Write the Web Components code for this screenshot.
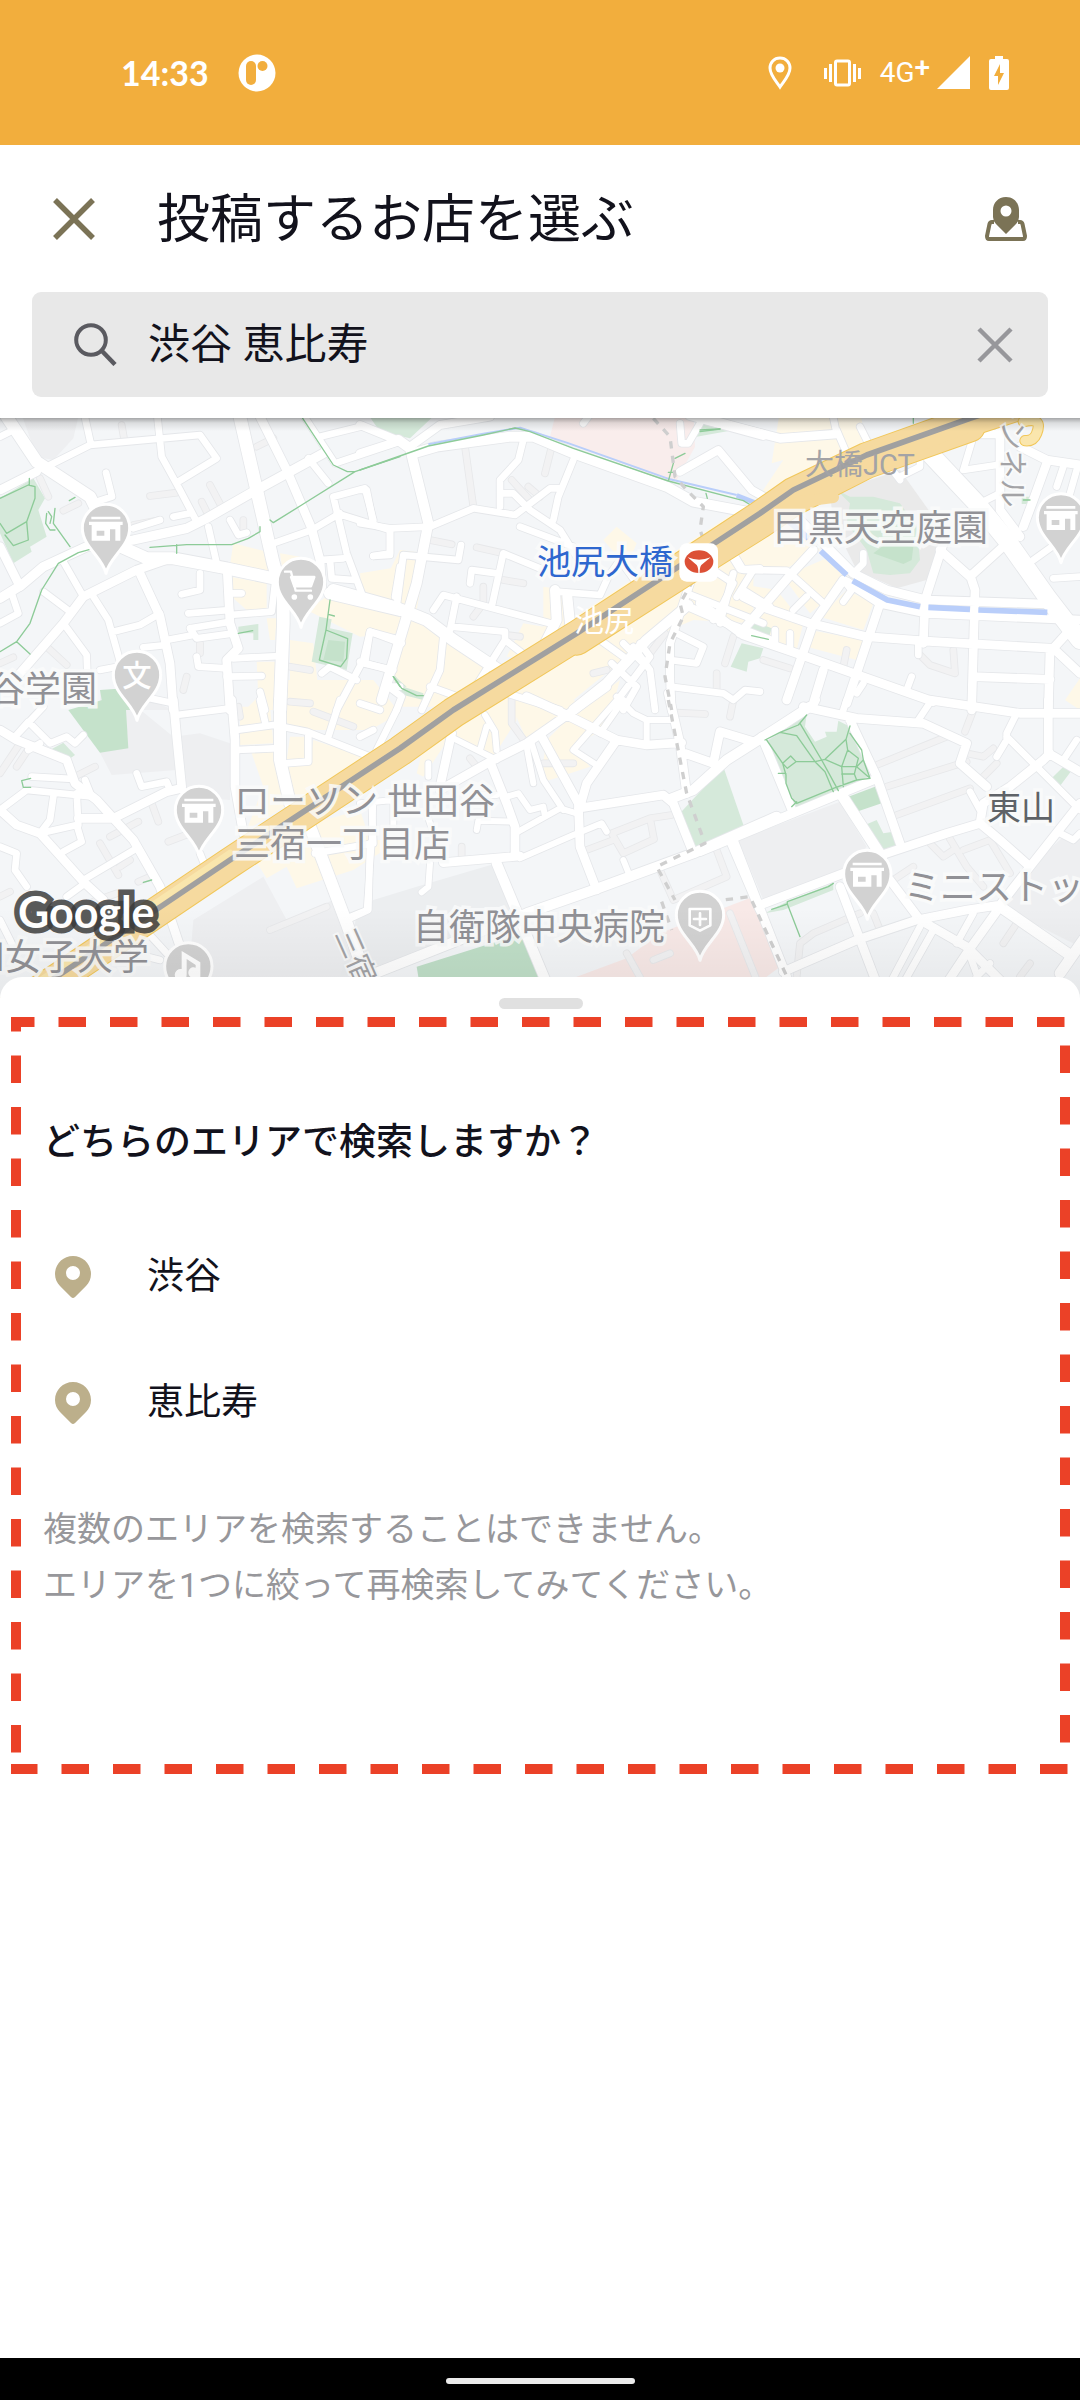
<!DOCTYPE html>
<html lang="ja">
<head>
<meta charset="utf-8">
<meta name="viewport" content="width=device-width, initial-scale=1">
<title>投稿するお店を選ぶ</title>
<style>
    body {
        margin: 0;
        background: #fff;
        color: #12121c;
        font-family: Roboto, "Noto Sans CJK JP", sans-serif;
    }
</style>
</head>
<body>
<place-picker></place-picker>

<script>
function define(name, html) {
    const template = document.createElement('template');
    template.innerHTML = html;
    customElements.define(name, class extends HTMLElement {
        constructor() {
            super();
            this.attachShadow({ mode: 'open' });
            this.shadowRoot.appendChild(template.content.cloneNode(true));
        }
    });
}

define('status-bar', `
    <style>
        :host {
            display: flex;
            align-items: center;
            justify-content: space-between;
            height: 145px;
            padding: 0 71px 0 121px;
            box-sizing: border-box;
            background: #f2ae3d;
            color: #fff;
        }
        div { display: flex; align-items: center; }
        .left { gap: 29px; }
        .time { font: 700 34px/40px Lato, sans-serif; }
        .network { font-size: 28px; line-height: 40px; margin: 0 7px 0 19px; }
        sup { font-size: 28px; line-height: 0; vertical-align: 5px; font-weight: 500; }
        svg { display: block; }
        .vibrate { margin-left: 32px; }
        .battery { margin-left: 19px; }
    </style>
    <div class="left">
        <span class="time">14:33</span>
        <svg width="38" height="38" viewBox="0 0 38 38">
            <circle cx="19" cy="19" r="18.500" fill="#fff"/>
            <rect x="8" y="7" width="10" height="24" rx="5" fill="#f2ae3d"/>
            <circle cx="24.500" cy="12" r="5" fill="#f2ae3d"/>
        </svg>
    </div>
    <div>
        <svg width="24" height="34" viewBox="0 0 24 34">
            <path d="M12 2C6 2 2 6.500 2 12C2 19 8 25 12 31C16 25 22 19 22 12C22 6.500 18 2 12 2Z" fill="none" stroke="#fff" stroke-width="3"/>
            <circle cx="12" cy="12" r="4.500" fill="#fff"/>
        </svg>
        <svg class="vibrate" width="37" height="28" viewBox="0 0 37 28" fill="#fff">
            <rect x="11.500" y="2" width="14" height="24" rx="1.500" fill="none" stroke="#fff" stroke-width="3"/>
            <path d="M0 9h3v11H0zM5 5h3v18H5zM29 5h3v18h-3zM34 9h3v11h-3z"/>
        </svg>
        <span class="network">4G<sup>+</sup></span>
        <svg width="33" height="33" viewBox="0 0 33 33"><path d="M33 0V33H0Z" fill="#fff"/></svg>
        <svg class="battery" width="20" height="34" viewBox="0 0 20 34">
            <path d="M6 0h8v3h4q2 0 2 2v27q0 2-2 2H2q-2 0-2-2V5q0-2 2-2h4z" fill="#fff"/>
            <path d="M11 8L5 20h4v9l6-12h-4z" fill="#f2ae3d"/>
        </svg>
    </div>
`);

define('icon-button', `
    <style>
        :host { display: block; }
        button {
            display: flex;
            align-items: center;
            justify-content: center;
            width: 64px;
            height: 64px;
            padding: 0;
            border: 0;
            background: none;
            color: inherit;
            cursor: pointer;
        }
    </style>
    <button type="button"><slot></slot></button>
`);

define('top-bar', `
    <style>
        :host { display: flex; align-items: center; height: 147px; padding: 0 42px; }
        icon-button { color: #7b7356; }
        h1 { flex: 1; margin: 0 0 0 51px; padding-top: 3px; font-size: 53px; font-weight: 400; line-height: 72px; }
    </style>
    <icon-button>
        <svg width="42" height="42" viewBox="0 0 42 42" role="img" aria-label="閉じる">
            <path d="M2 2L40 40M40 2L2 40" stroke="currentColor" stroke-width="5.500"/>
        </svg>
    </icon-button>
    <h1><slot></slot></h1>
    <icon-button>
        <svg width="42" height="44" viewBox="0 0 42 44" role="img" aria-label="地図">
            <path d="M9 25H7Q5 25 4.500 27L2 39Q2 42 4 42H38Q40 42 40 39L37.500 27Q37 25 35 25H33" fill="none" stroke="currentColor" stroke-width="4"/>
            <path fill-rule="evenodd" fill="currentColor" d="M21 0C13 0 8 6 8 13V20Q8 24 11 27L21 37L31 27Q34 24 34 20V13C34 6 29 0 21 0ZM21 8.500A5.500 5.500 0 1 1 21 19.500A5.500 5.500 0 1 1 21 8.500Z"/>
        </svg>
    </icon-button>
`);

define('search-field', `
    <style>
        :host {
            display: flex;
            align-items: center;
            height: 105px;
            margin: 0 32px 21px;
            padding: 0 21px 0 42px;
            border-radius: 9px;
            background: #e8e8e8;
        }
        label { display: flex; flex: 1; align-items: center; gap: 31px; color: #5a5a60; }
        input {
            flex: 1;
            min-width: 0;
            padding: 0;
            border: 0;
            outline: 0;
            background: none;
            color: #12121c;
            font: inherit;
            font-size: 42px;
            line-height: 60px;
        }
        icon-button { color: #97979b; }
    </style>
    <label>
        <svg width="43" height="43" viewBox="0 0 43 43" role="img" aria-label="検索">
            <circle cx="17" cy="17" r="14.800" fill="none" stroke="currentColor" stroke-width="4"/>
            <path d="M27.500 27.500L41 41.500" stroke="currentColor" stroke-width="4.500"/>
        </svg>
        <input type="text" value="渋谷 恵比寿">
    </label>
    <icon-button>
        <svg width="36" height="36" viewBox="0 0 36 36" role="img" aria-label="クリア">
            <path d="M2 2L34 34M34 2L2 34" stroke="currentColor" stroke-width="4.500"/>
        </svg>
    </icon-button>
`);

define('map-label', `
    <style>
        :host {
            position: absolute;
            color: #919196;
            font-size: 36px;
            line-height: 43px;
            white-space: nowrap;
            paint-order: stroke fill;
            -webkit-text-stroke: 7px rgba(250, 251, 251, .85);
        }
        :host([small]) { font-size: 29px; color: #a3a3a6; -webkit-text-stroke-width: 4px; }
        :host([plain]) { -webkit-text-stroke-width: 0; }
        :host([area]) { color: #5f6368; font-size: 34px; }
        :host([station]) { color: #2e67cf; font-size: 34px; }
        :host([road]) { color: #fff; font-size: 30px; -webkit-text-stroke-width: 0; }
        :host([sideways]) { writing-mode: vertical-rl; text-orientation: sideways; }
    </style>
    <slot></slot>
`);

// Map geometry is drawn at three units to the pixel, in six tiles.
const tiles = { a: [0, 0], b: [1080, 0], c: [2100, 0], d: [0, 870], e: [1080, 870], f: [2100, 870] };

const areas = [
    // blocks
    ['a', '#eeeff1', 'M60 0H240L220 85L160 150L110 140ZM300 840H380L520 900H300Z'],
    ['d', '#eeeff1', 'M300 158L385 0L520 110L600 100L690 130V300L550 290L530 210L335 225ZM580 660L790 530L860 660L1000 600L1090 900H560Z'],
    ['e', '#eceef0', 'M40 600L170 560L410 490L480 640L30 830H-60L-10 650Z'],
    ['f', '#eeeff1', 'M115 420L420 305L500 440L420 520L190 600ZM980 510L1090 410H1140V740L900 620Z'],
    ['c', '#eaeaea', 'M390 250L600 180L700 320L730 400L680 510L590 535L470 480L400 340Z'],
    // shopping streets
    ['a', '#fef8e8', 'M700 400L820 430L815 495L690 465ZM690 500L800 520V600H740L695 560ZM800 625H830L825 690H810ZM870 690L940 700L955 840L930 880H870ZM770 755H825L820 900H735L775 860ZM920 600L980 560L1200 620V670L1080 680L1000 640ZM1080 490L1200 470V590L1090 570ZM840 430L900 440L850 500Z'],
    ['b', '#fef8e8', 'M0 500L90 480L120 420L200 430L170 600L0 570ZM0 600L180 620L420 780L240 890H120L100 800L140 640L70 670H0ZM550 530L620 540V660L480 740L440 740L490 640L550 650ZM730 390L770 350L830 400L800 470ZM600 650L1120 310L1180 290V400L560 760ZM240 900L640 700L990 500L1180 400V640L1000 630L860 690L640 870L560 910ZM640 870L700 900H560Z'],
    ['c', '#fef8e8', 'M240 0H480L500 120L300 220L150 300L250 150L215 160ZM30 420L260 300L360 420L250 480H130ZM250 500L390 440L440 520L330 610ZM0 470L80 480L60 600L0 560ZM110 520L230 540L310 640L190 590ZM440 540L520 580L490 660L360 620ZM330 660L490 690L470 750L320 710ZM160 600L310 640L290 720L170 690ZM1095 870L1140 805V900Z'],
    ['d', '#fef8e8', 'M720 20H810L820 130L720 135ZM755 160L820 150L870 310L740 390L790 260ZM850 -60H1120L1200 40L1110 90L920 90L860 70ZM870 110L915 110V180H860ZM940 120L1120 180L880 310L860 200L930 190ZM800 535L740 440L900 380L1080 330L1110 420L1200 420L1060 510L890 565L860 500Z'],
    ['e', '#fef8e8', 'M170 220L200 100L460 -60L470 60L400 170L270 110L190 230ZM460 30L620 40L500 120ZM620 60L780 -60L740 80L640 140L690 200L540 250L560 120Z'],
    // hospitals
    ['b', '#f9edec', 'M590 0H1000L1005 110L950 210L920 210L570 80Z'],
    ['e', '#f8e9e7', 'M650 830L800 775L900 700L1050 640L1180 590L1260 800L1180 860H650Z'],
    // parks
    ['a', '#d5e9da', 'M0 265L100 205L135 265L115 300L140 380L90 410L95 425L40 460L0 370ZM715 650L775 642V690H760V670H715ZM958 620L995 628L990 655L1058 670L1040 780L935 755ZM1180 795L1220 830L1190 830Z'],
    ['a', '#c5e2cb', 'M985 690L1035 695L1030 755L970 750ZM300 840L375 835L390 900L310 900Z'],
    ['b', '#d5e9da', 'M15 0H240L150 85L60 65ZM1020 40L1110 62L1010 80ZM100 790L130 830L190 850V870L110 850ZM1165 670L1185 635L1235 655L1225 690ZM1145 700L1210 715L1200 745L1165 755L1160 785L1112 770Z'],
    ['c', '#d5e9da', 'M410 240L450 260L520 260L600 280L650 350L660 450L630 490L570 495L520 490L500 420L440 340L450 280ZM965 260H990V282H965Z'],
    ['c', '#c5e2cb', 'M520 430L560 400L600 405L640 410L635 450L610 462Z'],
    ['d', '#c5e2cb', 'M205 30L375 -20L385 145L300 158Z'],
    ['d', '#d5e9da', 'M150 150L190 128L225 165L200 182Z'],
    ['e', '#d5e9da', 'M960 340L1090 200L1152 380L1010 445Z'],
    ['e', '#c0dfc8', 'M170 800L490 700L545 860H180Z'],
    ['f', '#d5e9da', 'M195 115L320 42L315 80L345 125L380 110L375 95L410 95L415 62L450 80L512 235L280 325ZM495 375L530 360L550 400L580 395L595 435L545 455ZM195 640L260 605L400 550V570L250 630ZM1055 235L1090 200L1112 215L1080 258Z'],
    ['f', '#c5e2cb', 'M445 290L525 260L545 310L470 335Z']
];

// Service lanes, grey
const lanes = [
    ['a', 'M365 45L372 85M120 205L145 260M190 302L235 280M450 258L530 248M630 225L670 300M605 275L620 305M400 345L480 330M730 330V365M140 710L200 765M0 760L40 742M600 700V730M560 800L550 840M770 110L820 85M870 770L930 780M870 875L930 880'],
    ['b', 'M315 110L340 290M575 110L555 190M455 210L510 270M505 230L540 260M210 390L275 403M350 412L430 430M430 510L490 520M370 530L370 580L340 620M440 675L480 680M915 670L870 730M700 790L740 780M1120 680L1095 760M1070 790V840'],
    ['c', 'M190 750L270 775M440 720L430 770M760 720L765 790L690 765L660 735'],
    ['d', 'M60 130L0 220M50 200L90 140M225 230L285 200M455 310L475 365M505 425L570 400M330 410L415 365M300 430L355 525M360 500L390 480M415 545L450 530M280 605L350 580M0 590L30 575M810 690L980 620M715 20L720 50M940 35L1060 80'],
    ['e', 'M455 -30L455 70L495 125M330 175L350 200M550 190L640 190M305 440V470M680 450L760 420M755 400L870 355L935 345M870 355L882 418L790 460L755 400M950 38L1035 42M1120 0L1110 50M900 510L940 600L1100 530L1070 450M1110 640L1190 840M800 760L850 850M880 780L930 760'],
    ['f', 'M820 30L795 95M530 195L740 110M560 260L800 185M590 345L810 265M800 160L850 170L880 145M850 230L890 190M690 430L730 470L760 450M740 400L800 500L850 560M790 450L870 420L930 520M290 830L300 730L340 700L480 640M520 640L540 690M950 670L910 730M990 790L960 830M580 540L640 500']
];

// [tile, width, path]
const roads = [
    ['a', 20, 'M0 80L30 65M150 165L270 105L600 75L650 145L535 215M250 0L272 100M470 0L485 140L540 240L590 335M625 350L650 460M318 188L336 260L290 275M0 640L55 610L35 550M190 455L250 560M280 560L325 630L370 790M340 665L420 645L480 610M130 545L210 605M190 640L260 735L262 790L190 795M500 690L580 675M430 712L500 705M600 490V540L545 553M565 610L690 600M570 655L690 635M570 655L590 685L700 670M690 550H725M690 615L815 605L825 520M590 740L595 770L680 775M680 800L785 798M700 745L840 738M780 845L795 900M925 145L985 220M900 0L1005 160L1200 95M960 80L1090 48M820 400L935 360L1020 310M1120 330L1095 235L1000 260L1040 430L1085 550M1010 310L1170 360V435L1120 438M960 450L1030 445M990 450L995 505L1060 510M1200 690L1110 665L1090 750L1010 900M1090 760L1180 780M965 790L990 770L1070 810M1200 470L1185 560M1200 830L1155 830L1180 750M690 330L715 375L740 368M520 320L570 310M400 355L480 330M300 780L380 765M450 865L520 880'],
    ['a', 26, 'M0 240L110 185M60 790L190 640L250 560L410 480L510 445M0 410L60 530M420 490L480 620L510 760L520 900M682 490L690 640L715 715L680 750L690 900M770 0L860 180L935 355L960 450L965 530'],
    ['a', 28, 'M0 565L65 525L130 470L260 410L400 390L560 355L620 325L760 245L970 130'],
    ['a', 36, 'M20 20L110 155L270 260L340 400L440 445L520 445L680 475L820 505M990 550L1200 600'],
    ['a', 38, 'M715 0L770 240L820 460L850 560V640L840 900'],
    ['b', 20, 'M490 90L475 150L420 210V290M420 250H460L510 300L600 360L650 440M640 150L595 260L580 330M0 340L90 355L210 350L340 295L465 315L570 235H600M90 360V430L40 438M0 240H20L40 340M480 350L640 410M110 590L130 435L295 450L303 405M220 600L250 555L570 640M395 590L430 430L540 475M330 520L335 480L410 490M290 560L270 660M275 650L435 665V690L350 825M435 690L500 740M250 680L240 780L185 900M210 830L320 870M0 755L90 780M15 760L30 665L125 700M0 880L60 900M85 830L125 860L110 900M590 545L720 555L745 500L780 450L830 520M1110 430L1140 478L1200 475M1060 480L1120 520L1090 580L1060 630M980 550L1210 640M1180 480L1130 560M950 670L1030 710L1010 760L930 750M820 710L870 780L885 900M720 690L790 740M790 700L850 760M755 760L830 830L790 900M840 700L870 740L780 860M930 830L1090 850L1120 870L1155 840L1200 845M960 40L965 100H985L1020 40M670 40L700 0M440 850L600 900'],
    ['b', 24, 'M0 130L110 95M110 90L0 45M150 110L240 45L390 20M960 185L1075 120L1175 240L1220 265M985 590L1100 640L1230 690M990 520L930 700V800L935 900'],
    ['b', 30, 'M160 130L230 110L450 80H520L640 130L920 230L1000 275L1160 305M115 90L150 115L205 340L170 520L65 870M985 585L860 690L740 820L640 900M585 540L590 630L555 700M622 560L630 640M990 15L1210 75'],
    ['b', 36, 'M-80 540L100 590L200 630L280 690L430 790'],
    ['c', 20, 'M410 60L440 130M395 0L410 70M480 50L510 110M820 80L790 180L890 165M1090 170L1070 230M1130 180L1110 250M1000 450L1140 350M1060 505L1140 500M840 280L900 250M100 430L130 480L260 482M100 490L60 640M270 490L370 580M320 560L280 600M430 575L455 540L430 510M655 700V735M620 840L635 800M490 430V460L460 490M570 170L600 210M660 130V170L600 200M470 850L490 820M225 660V700M270 670V720M130 540L210 590'],
    ['c', 26, 'M0 25L240 85L410 72M700 110L820 72H900M900 0V300L960 380M960 110L1040 150L1140 165M1040 160L1000 270L970 350M120 670L280 485L340 420M290 320L460 490L560 540L680 570L1040 582M440 515L540 580L680 610L1140 630M920 400L810 500L720 420M810 495L825 540L815 900M730 400L675 570L670 700M130 560L200 595L330 640L500 680L700 695L1060 715M430 510L340 640L260 870M540 580L440 880M820 800L1050 808M1050 720L1045 900M1060 715L1140 790M1060 715L1110 660M370 780L340 880M0 580L130 675L290 730L460 790L700 875'],
    ['c', 54, 'M670 110L830 280L920 390L1040 560L1140 690'],
    ['d', 20, 'M45 110L85 65L150 130L200 110L225 130L250 105M45 110L130 20M0 330L80 270L280 290M95 230L220 237M160 290L150 360L120 400L230 375L245 425L190 455M230 280L235 375M410 220L425 260L500 245L510 270M530 45L690 25M255 240L275 290M0 440L50 460L45 510L80 560M250 540L410 445M200 590L255 550M0 660L40 740M710 90L820 75L920 95L1110 170M925 100V185L855 190M710 150L820 145M780 0L795 65M1020 0L985 110M1130 150L1190 30M1120 90L1080 110M945 460L1120 430L1115 300M1110 430L1105 630L1040 660M600 460L620 510M400 760L480 780M445 700L500 760M120 130L85 150'],
    ['d', 26, 'M0 90L50 120L200 180L225 250L290 300L340 355L400 420L480 560L540 740M0 330L50 375L120 400L250 545L310 600M235 355H340L500 275L545 265M520 0L530 110L545 260M695 0L705 120V260L730 400'],
    ['d', 36, 'M840 0V180L870 310M930 380L1040 670L1100 840'],
    ['e', 18, 'M440 290L475 280L510 330L550 320L555 350M465 400L600 325L650 340M500 140L520 250M515 130L550 240L610 330M480 475L640 405L725 370L740 395M710 195L640 150L780 -10M720 100L790 0M860 135V60L820 40L770 -10M862 60H940M210 490L205 560L185 577M205 190V230M270 110L360 155L410 180M410 150L405 95L375 45M380 80L360 150M0 310L100 300V380M200 340L220 400M40 300L35 430L20 630L-30 650M790 480L810 530M350 390L355 362L460 365M340 285H410'],
    ['e', 26, 'M240 270L390 185L500 130L600 60L740 -40M390 185L440 310L465 380V460M250 488L480 468M275 100L240 260M545 110L655 310L660 440L710 570M655 325L910 285L940 310L1000 460M770 120L680 250L660 320M500 -10L620 45L770 120L860 135L965 128M925 -20L960 130L980 280M975 160L1060 190L1080 95L1180 125M1110 420L1200 630'],
    ['e', 30, 'M20 830L500 640L700 570L1000 460L1250 350M410 490L560 850M935 295L1000 270L1100 180L1250 85L1350 20'],
    ['f', 20, 'M920 110L1140 330M950 40L920 100V120L890 170M810 275L840 330M1080 400L1120 420L1140 400M820 640L770 730M660 680L570 850M700 690L610 850M870 790L830 830M655 60L695 0M430 30L440 0M340 20L350 0M1090 180L1130 120M800 740L840 850'],
    ['f', 26, 'M310 20L470 55L670 70L800 130L780 190L860 260M185 110L280 340M100 420L170 600L260 830M450 60L530 230L600 430M0 455L520 240M180 615L430 520M420 560L530 850M570 540L660 660M545 465L740 400L840 370L850 310L930 260L1030 180L1050 160M1045 0V160L1140 215M840 370L900 420L990 500M250 815L470 720L650 660L800 630L900 615L990 500L1140 310M660 660L800 740L910 850M900 620L800 760L740 850M690 0L960 40H1140'],
    ['f', 32, 'M425 285L545 470M900 620L1110 765M1150 720L1080 820']
];

const paths = [
    ['a', 'M0 265L85 225L105 230V265L80 335L20 370L0 340M80 335L85 390L40 407L15 375M88 205V225M165 295L160 340L210 410M145 305L155 320L150 340M140 310L137 340L150 360H165M208 272L225 262M0 725L50 695L90 732M50 695L90 640L125 540L175 460L235 428L270 418M450 412L560 404H695L745 385L780 365V350M530 404V430M810 330L820 338L905 285L1065 185L1200 140M908 25L1000 165L1042 185H1065M715 670L758 662M990 570L978 660L1043 686L1040 745L1022 770L958 750L978 660M985 613L1003 618M1180 800L1200 830'],
    ['b', 'M0 180L205 108L370 75L465 54L510 65L640 115L925 213L1150 272L1172 285V298M925 213L940 160M945 145L975 130M925 187H945M1038 250L1042 265M100 800L125 835L170 857H190M1020 60L1080 57'],
    ['c', 'M155 677L205 688M640 25V40M0 65L60 57M970 270H990'],
    ['d', 'M92 235L65 242L70 262H92M430 547L455 540'],
    ['f', 'M195 120L240 97L295 75L320 45M240 97L290 107L345 185L375 215L400 275M300 70L365 180L415 272M200 120L248 190L262 205L288 185L272 168L248 190M288 185H345L375 178L438 118L450 78M248 190L258 225V250L275 295L290 310L400 265L470 240L510 235L490 180L485 150L450 100M438 118L443 150L425 200L430 260M375 178L425 200H470L490 180M443 150L475 175L463 222L470 240M425 222H463M235 220H258M275 320L290 305M470 200L510 235M215 628L240 620L262 612V605L385 560L400 550M262 612L300 710']
];

const boundaries = [
    ['b', 'M880 25L930 80L945 200L980 240L1030 290L1020 360L1035 400M1000 510L960 580L970 620L930 700L915 800L935 900'],
    ['e', 'M925 0L980 280L1035 430L890 500L945 600M905 605L935 690M1010 610L1170 590L1290 850L1180 870']
];

const place = tile => 'transform="translate(' + tiles[tile] + ')"';
const strokes = (list, color, width) => list.map(([tile, d]) =>
    `<path ${place(tile)} stroke="${color}" stroke-width="${width}" d="${d}"/>`).join('');

const railway = 'M-40 1838L200 1680L690 1350L1200 1015L1360 900L1730 670L2140 402L2280 310L2380 240L2600 135L2910 25L3050 -20';

define('area-map', `
    <style>
        :host { display: block; position: relative; height: 580px; overflow: hidden; background: #f4f6f8; }
        :host::after {
            content: "";
            position: absolute;
            inset: 0;
            background: linear-gradient(rgba(0, 0, 0, .32), rgba(0, 0, 0, .1) 5px, rgba(0, 0, 0, 0) 13px, rgba(0, 0, 0, 0) 490px, rgba(0, 0, 0, .06));
            pointer-events: none;
        }
        svg { display: block; width: 100%; height: 100%; }
        .logo {
            font-family: Lato, sans-serif;
            font-size: 43px;
            font-weight: 700;
            color: #fff;
            -webkit-text-stroke: 11px rgba(60, 60, 60, .85);
        }
        .slanted { transform: rotate(66deg); }
    </style>
    <svg viewBox="0 24 3240 1740" preserveAspectRatio="xMidYMid slice" fill="none" stroke-linejoin="round" stroke-linecap="round">
        <defs>
            <g id="pin">
                <path d="M0 136C-10 88-71 56-71 0A71 71 0 1 1 71 0C71 56 10 88 0 136Z" fill="#d2d2d2" stroke="#fff" stroke-width="9"/>
            </g>
            <g id="shop">
                <use href="#pin"/>
                <path fill="#fff" fill-rule="evenodd" d="M-44-34H43V-26H-44ZM-51-19H50V-9H43V38H28V4H12V38H-43V-9H-51ZM-28 8V23H-5V8Z"/>
            </g>
        </defs>
        ${areas.map(([tile, fill, d]) => `<path ${place(tile)} fill="${fill}" d="${d}"/>`).join('')}
        ${strokes(lanes, '#e7e8ea', 23)}
        ${strokes(lanes, '#f2f2f3', 18)}
        ${roads.map(([tile, width, d]) => `<path ${place(tile)} stroke="#e5e7ea" stroke-width="${width + 5}" d="${d}"/>`).join('')}
        ${roads.map(([tile, width, d]) => `<path ${place(tile)} stroke="#fff" stroke-width="${width}" d="${d}"/>`).join('')}
        <g stroke="#b9cefa" stroke-linecap="butt">
            <path stroke-width="17" d="M2355 325L2425 385M2462 423L2540 495M2558 512L2662 570L2760 590M2785 592L2910 598M2935 600L3142 607"/>
            <path stroke-width="6" d="M1285 103L1450 71L1560 53L1700 98L2010 208L2210 255"/>
            <path stroke-width="14" d="M2210 256L2275 282"/>
        </g>
        ${strokes(paths, '#8dcb98', 4)}
        <g stroke-dasharray="22 22" stroke-linecap="butt">${strokes(boundaries, '#cfcfcf', 10)}</g>
        <path transform="translate(0 8)" stroke="#f1c75a" stroke-width="94" d="${railway}"/>
        <path stroke="#f1c75a" stroke-width="94" d="M1730 690L2140 428L2280 340L2380 272L2600 160L2910 50"/>
        <path transform="translate(0 8)" stroke="#f6da9f" stroke-width="88" d="${railway}"/>
        <path stroke="#f6da9f" stroke-width="88" d="M1730 690L2140 428L2280 340L2380 272L2600 160L2910 50"/>
        <path transform="translate(0 -22)" stroke="#f9e6ad" stroke-width="18" d="M-40 1838L200 1680L690 1350"/>
        <path stroke="#f6da9f" stroke-width="34" d="M2300 330L2400 275L2500 262M2480 230L2570 205M2640 160L2790 95L2980 20M2665 155V140"/>
        <path stroke="#a0a0a0" stroke-width="17" d="${railway}"/>
        <path stroke="#f1c75a" stroke-width="34" d="M3070 35Q3130 20 3110 70Q3100 95 3075 92"/>
        <path stroke="#fae6ad" stroke-width="28" d="M3070 35Q3130 20 3110 70Q3100 95 3075 92"/>
        <use href="#shop" x="318" y="354"/>
        <use href="#shop" x="597" y="1200"/>
        <use href="#shop" x="2602" y="1392"/>
        <use href="#shop" x="3183" y="322"/>
        <use href="#pin" x="903" y="516"/>
        <g transform="translate(903 516)" stroke="#fff" stroke-width="7">
            <path fill="#fff" d="M-30-15H40L30 13H-20Z"/>
            <path d="M-48-31H-30L-16 26H30"/>
            <circle cx="-20" cy="45" r="5" fill="#fff"/><circle cx="28" cy="45" r="5" fill="#fff"/>
        </g>
        <use href="#pin" x="411" y="795"/>
        <text x="411" y="827" text-anchor="middle" fill="#fff" font-size="88" font-weight="500">文</text>
        <use href="#pin" x="565" y="1669"/>
        <path transform="translate(565 1669)" fill="#fff" d="M-20-46L36-12V32H25A16 16 0 1 1 22 4V-4L-5-22V24A18 18 0 1 1-20 8Z"/>
        <use href="#pin" x="2100" y="1515"/>
        <path transform="translate(2100 1515)" stroke="#fff" stroke-width="8" d="M-31-18H31V31L0 47L-31 31ZM0-5V30M-18 12H18"/>
        <rect x="2038" y="400" width="116" height="115" rx="22" fill="#fff"/>
        <ellipse cx="2097" cy="455" rx="43" ry="34" fill="#dc5036"/>
        <path fill="#fff" d="M2063 442Q2097 456 2132 442L2104 465Q2099 470 2099 490H2095Q2095 470 2090 465Z"/>
    </svg>
    <map-label style="left: -11px; top: 251px">谷学園</map-label>
    <map-label station style="left: 537px; top: 123px">池尻大橋</map-label>
    <map-label road style="left: 574px; top: 181px">池尻</map-label>
    <map-label small plain style="left: 805px; top: 26px">大橋JCT</map-label>
    <map-label style="left: 772px; top: 90px">目黒天空庭園</map-label>
    <map-label small sideways style="left: 990px; top: -26px">トンネル</map-label>
    <map-label style="left: 234px; top: 363px">ローソン 世田谷<br>三宿一丁目店</map-label>
    <map-label area style="left: 987px; top: 369px">東山</map-label>
    <map-label style="left: 904px; top: 449px">ミニストッ</map-label>
    <map-label style="left: 413px; top: 489px">自衛隊中央病院</map-label>
    <map-label style="left: -31px; top: 519px">和女子大学</map-label>
    <map-label small class="slanted" style="left: 326px; top: 517px">三宿</map-label>
    <map-label class="logo" style="left: 18px; top: 472px">Google</map-label>
`);

define('dashed-frame', `
    <style>
        :host { display: block; position: relative; }
        svg { position: absolute; inset: 0; width: 100%; height: 100%; pointer-events: none; }
        /* ten pixels thick, straddling the edge so that the inner half shows */
        line { stroke: #eb4127; stroke-width: 20px; stroke-dasharray: 27.5px 24px; }
    </style>
    <slot></slot>
    <svg>
        <line x1="0" y1="0" x2="100%" y2="0" stroke-dashoffset="4"/>
        <line x1="100%" y1="10" x2="100%" y2="98%" stroke-dashoffset="33"/>
        <line x1="0" y1="100%" x2="100%" y2="100%" stroke-dashoffset="1"/>
        <line x1="0" y1="0" x2="0" y2="100%" stroke-dashoffset="13"/>
    </svg>
`);

define('area-option', `
    <style>
        :host { display: block; }
        button {
            display: flex;
            align-items: center;
            gap: 56px;
            width: 100%;
            height: 126px;
            padding: 0 12px;
            border: 0;
            background: none;
            color: inherit;
            font: inherit;
            font-size: 37px;
            line-height: 56px;
            cursor: pointer;
        }
    </style>
    <button type="button">
        <svg width="36" height="42" viewBox="0 0 36 42">
            <path fill="#bcaf8b" fill-rule="evenodd" d="M18 0C8 0 0 8 0 18C0 23 2 27 5 30L16 41Q18 43 20 41L31 30C34 27 36 23 36 18C36 8 28 0 18 0ZM18 10A7 7 0 1 1 18 24A7 7 0 1 1 18 10Z"/>
        </svg>
        <slot></slot>
    </button>
`);

define('bottom-sheet', `
    <style>
        :host {
            display: block;
            position: relative;
            flex: 1;
            margin-top: -21px;
            padding: 21px 10px 0 11px;
            border-radius: 22px 22px 0 0;
            background: #fff;
        }
        .handle { width: 84px; height: 11px; margin: 0 auto 8px; border-radius: 6px; background: #e0e0e0; }
        .content { padding: 98px 32px 161px; }
        h2 { margin: 0 0 43px; font-size: 37px; font-weight: 500; line-height: 56px; }
        p { margin: 35px 0 0; color: #97979b; font-size: 34px; line-height: 56px; }
    </style>
    <div class="handle"></div>
    <dashed-frame>
        <div class="content">
            <h2>どちらのエリアで検索しますか？</h2>
            <area-option>渋谷</area-option>
            <area-option>恵比寿</area-option>
            <p>複数のエリアを検索することはできません。<br>エリアを1つに絞って再検索してみてください。</p>
        </div>
    </dashed-frame>
`);

define('navigation-bar', `
    <style>
        :host { display: flex; align-items: center; justify-content: center; height: 42px; padding-top: 4px; box-sizing: border-box; background: #000; }
        div { width: 189px; height: 6px; border-radius: 3px; background: #ebebeb; }
    </style>
    <div></div>
`);

define('place-picker', `
    <style>
        :host { display: flex; flex-direction: column; min-height: 100vh; }
    </style>
    <status-bar></status-bar>
    <top-bar>投稿するお店を選ぶ</top-bar>
    <search-field></search-field>
    <area-map></area-map>
    <bottom-sheet></bottom-sheet>
    <navigation-bar></navigation-bar>
`);
</script>
</body>
</html>
